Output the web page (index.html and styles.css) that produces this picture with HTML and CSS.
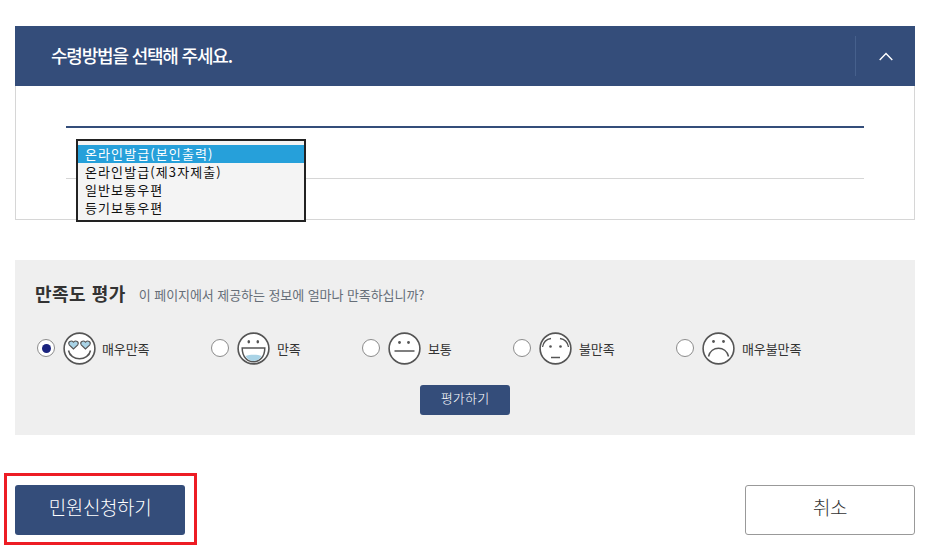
FILE: index.html
```html
<!DOCTYPE html>
<html lang="ko">
<head>
<meta charset="utf-8">
<title>수령방법 선택</title>
<link rel="stylesheet" href="styles.css">
</head>
<body>
<section class="panel">
  <header class="panel-head">
    <h2 class="panel-title">수령방법을 선택해 주세요.</h2>
    <button class="toggle" type="button" aria-label="접기">
      <svg width="14" height="9" viewBox="0 0 14 9"><path d="M0.7 8 L7 1.5 L13.3 8" fill="none" stroke="#fff" stroke-width="1.4"/></svg>
    </button>
  </header>
  <div class="panel-body">
    <div class="table-row"></div>
    <ul class="listbox">
      <li class="option selected">온라인발급(본인출력)</li>
      <li class="option">온라인발급(제3자제출)</li>
      <li class="option">일반보통우편</li>
      <li class="option">등기보통우편</li>
    </ul>
  </div>
</section>

<section class="survey">
  <div class="survey-head">
    <h3 class="survey-title">만족도 평가</h3>
    <p class="survey-desc">이 페이지에서 제공하는 정보에 얼마나 만족하십니까?</p>
  </div>
  <div class="rates">
    <label class="rate r1">
      <span class="radio on"></span>
      <svg class="face" viewBox="0 0 33 33"><circle cx="16.5" cy="16.5" r="15.4" fill="#fff" stroke="#555" stroke-width="1.6"/><path d="M10.5 17 L6.2 12.8 C4.6 10.2 8 7.6 10.5 10.2 C13 7.6 16.4 10.2 14.8 12.8 Z" fill="#a9d3e6" stroke="#555" stroke-width="1.1"/><path d="M22.5 17 L18.200 12.800 C16.600 10.200 20 7.600 22.500 10.200 C25 7.600 28.400 10.200 26.800 12.800 Z" fill="#a9d3e6" stroke="#555" stroke-width="1.1"/><path d="M5.500 18.500 C7.500 29.500 25.500 29.500 27.500 18.500" fill="none" stroke="#555" stroke-width="1.5"/></svg>
      <span class="rate-text">매우만족</span>
    </label>
    <label class="rate r2">
      <span class="radio"></span>
      <svg class="face" viewBox="0 0 33 33"><circle cx="16.5" cy="16.5" r="15.4" fill="#fff" stroke="#555" stroke-width="1.6"/><ellipse cx="11.8" cy="9.8" rx="1.3" ry="1.8" fill="#555"/><ellipse cx="20.800" cy="9.800" rx="1.300" ry="1.800" fill="#555"/><path d="M5.200 16 H27.800 C27.800 25 22.500 29.800 16.500 29.800 C10.500 29.800 5.200 25 5.200 16 Z" fill="#fff" stroke="#555" stroke-width="1.500"/><path d="M8.500 24 C12.500 22.200 20.500 22.200 24.500 24 C22.500 27.500 19.500 28.900 16.500 28.900 C13.500 28.900 10.500 27.500 8.500 24 Z" fill="#a9d3e6"/></svg>
      <span class="rate-text">만족</span>
    </label>
    <label class="rate r3">
      <span class="radio"></span>
      <svg class="face" viewBox="0 0 33 33"><circle cx="16.5" cy="16.5" r="15.4" fill="#fff" stroke="#555" stroke-width="1.6"/><circle cx="11.5" cy="10.5" r="1.4" fill="#555"/><circle cx="20.500" cy="10.500" r="1.400" fill="#555"/><path d="M6.500 19 H26.500" fill="none" stroke="#555" stroke-width="1.500"/></svg>
      <span class="rate-text">보통</span>
    </label>
    <label class="rate r4">
      <span class="radio"></span>
      <svg class="face" viewBox="0 0 33 33"><circle cx="16.5" cy="16.5" r="15.4" fill="#fff" stroke="#555" stroke-width="1.6"/><path d="M3.500 15 C4.500 9.500 8 7 12 6.500" fill="none" stroke="#555" stroke-width="1.300"/><path d="M29.500 15 C28.500 9.500 25 7 21 6.500" fill="none" stroke="#555" stroke-width="1.300"/><circle cx="11.500" cy="14.500" r="1.300" fill="#555"/><circle cx="21.500" cy="14.500" r="1.300" fill="#555"/><path d="M12 25.500 H21" fill="none" stroke="#555" stroke-width="1.500"/></svg>
      <span class="rate-text">불만족</span>
    </label>
    <label class="rate r5">
      <span class="radio"></span>
      <svg class="face" viewBox="0 0 33 33"><circle cx="16.5" cy="16.5" r="15.4" fill="#fff" stroke="#555" stroke-width="1.6"/><circle cx="11.500" cy="9.500" r="1.400" fill="#555"/><circle cx="21.500" cy="9.500" r="1.400" fill="#555"/><path d="M6.500 24.500 C9 13.500 24 13.500 26.500 24.500" fill="none" stroke="#555" stroke-width="1.500"/></svg>
      <span class="rate-text">매우불만족</span>
    </label>
  </div>
  <div class="survey-action">
    <button class="rate-btn" type="button">평가하기</button>
  </div>
</section>

<div class="actions">
  <div class="primary-wrap">
    <button class="primary" type="button">민원신청하기</button>
  </div>
  <button class="cancel" type="button">취소</button>
</div>
</body>
</html>
```
FILE: styles.css
```css
* { box-sizing: border-box; }
html, body { margin: 0; padding: 0; }
body {
  width: 931px;
  height: 560px;
  overflow: hidden;
  background: #fff;
  padding: 26px 16px 0 15px;
  font-family: "Noto Sans CJK KR", "Noto Sans", sans-serif;
  color: #333;
}
.panel { border: 1px solid #d6d6d6; border-top: 0; height: 194px; }
.panel-head {
  height: 60px;
  margin: 0 -1px;
  background: #344d7a;
  display: flex;
  align-items: center;
  justify-content: space-between;
  padding: 0 0 0 36px;
}
.panel-title { margin: 0 0 2px; font-size: 18px; font-weight: 500; letter-spacing: -1.2px; color: #fff; }
.toggle {
  width: 60px;
  height: 40px;
  padding: 0;
  background: none;
  border: 0;
  border-left: 1px solid #46608c;
  display: flex;
  align-items: center;
  justify-content: center;
}
.panel-body { position: relative; padding: 40px 50px 0; }
.table-row { height: 53px; border-top: 2px solid #344d7a; border-bottom: 1px solid #d6d6d6; }
.listbox {
  position: absolute;
  left: 60px;
  top: 53px;
  width: 230px;
  height: 83px;
  margin: 0;
  padding: 4px 0 0;
  list-style: none;
  background: #f4f4f4;
  border: 2px solid #222;
}
.option { height: 18px; padding-left: 7px; font-size: 13px; line-height: 18px; letter-spacing: 1.1px; color: #111; }
.option.selected { background: #26a0da; color: #fff; }
.survey { height: 175px; margin-top: 40px; background: #efefef; padding: 20px 20px 0; }
.survey-head { display: flex; align-items: center; height: 28px; }
.survey-title { margin: 0 13px 2px 0; font-size: 18px; font-weight: 700; letter-spacing: 0.5px; color: #333; }
.survey-desc { margin: 0; font-size: 13px; letter-spacing: -0.07px; color: #666e78; }
.rates { display: flex; height: 34px; margin-top: 23px; }
.rate { display: flex; align-items: center; }
.r1 { width: 174px; margin-left: 2px; }
.r2 { width: 151px; }
.r3 { width: 151px; }
.r4 { width: 163px; }
.radio {
  width: 18px;
  height: 18px;
  border: 1px solid #8c8c8c;
  border-radius: 50%;
  background: #fff;
  margin-right: 8px;
  display: flex;
  align-items: center;
  justify-content: center;
}
.radio.on::after { content: ""; width: 9px; height: 9px; border-radius: 50%; background: #1a237e; }
.face { width: 33px; height: 33px; margin-right: 7px; }
.r1 .face { margin-right: 6px; }
.rate-text { font-size: 13px; letter-spacing: -0.1px; color: #333; }
.survey-action { display: flex; justify-content: center; margin-top: 20px; }
.rate-btn {
  width: 90px;
  height: 30px;
  padding: 0 0 6px;
  background: #344d7a;
  border: 0;
  border-radius: 3px;
  color: #fff;
  font: 300 13px "Noto Sans CJK KR", sans-serif;
  letter-spacing: 0.2px;
}
.actions { display: flex; justify-content: space-between; margin-top: 50px; }
.primary-wrap { position: relative; }
.primary-wrap::after {
  content: "";
  position: absolute;
  left: -11px;
  top: -12px;
  width: 187px;
  height: 66px;
  border: 3px solid #ed1c24;
  pointer-events: none;
}
.primary, .cancel {
  width: 170px;
  height: 50px;
  padding: 0 0 8px;
  border-radius: 3px;
  font: 300 19px "Noto Sans CJK KR", sans-serif;
  letter-spacing: -0.4px;
  display: block;
}
.primary { background: #344d7a; border: 0; color: #fff; }
.cancel { background: #fff; border: 1px solid #999; color: #333; }
```
